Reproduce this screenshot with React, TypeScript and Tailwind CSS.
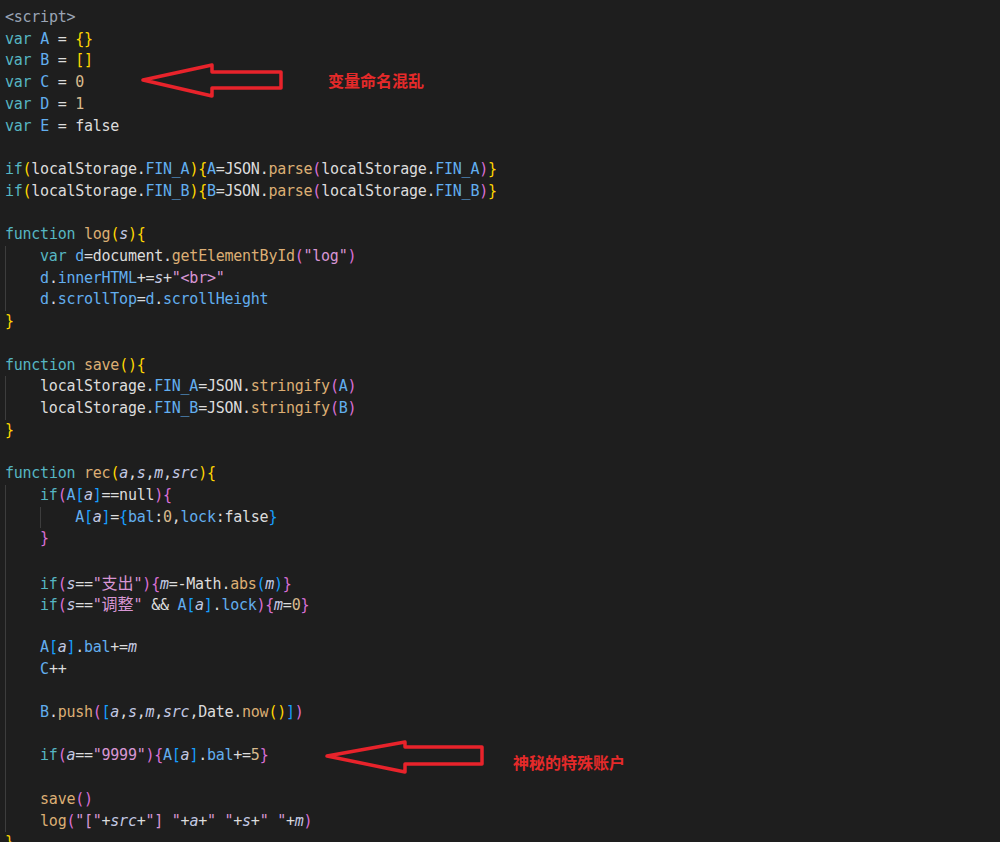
import React from 'react';

type Tok = [string, string];

const T = 'text-[#9aa5b6]';
const K = 'text-[#56b6c2]';
const V = 'text-[#62aeef]';
const W = 'text-[#dcdcdc]';
const F = 'text-[#dcae74]';
const P = 'text-[#c3c9e4] italic';
const S = 'text-[#d896d4]';
const SC = 'text-[#d896d4] font-["Noto_Sans_CJK_SC",sans-serif] text-[16px] tracking-normal';
const N = 'text-[#d7b98d]';
const B1 = 'text-[#ffd700]';
const B2 = 'text-[#da70d6]';
const B3 = 'text-[#179fff]';

interface Line {
  indent: number;
  toks: Tok[];
}

const L = (indent: number, ...toks: Tok[]): Line => ({ indent, toks });

const lines: Line[] = [
  L(0, [T, '<script>']),
  L(0, [K, 'var'], [W, ' '], [V, 'A'], [W, ' = '], [B1, '{}']),
  L(0, [K, 'var'], [W, ' '], [V, 'B'], [W, ' = '], [B1, '[]']),
  L(0, [K, 'var'], [W, ' '], [V, 'C'], [W, ' = '], [N, '0']),
  L(0, [K, 'var'], [W, ' '], [V, 'D'], [W, ' = '], [N, '1']),
  L(0, [K, 'var'], [W, ' '], [V, 'E'], [W, ' = false']),
  L(0),
  L(0, [K, 'if'], [B1, '('], [W, 'localStorage.'], [V, 'FIN_A'], [B1, ')'], [B1, '{'], [V, 'A'], [W, '=JSON.'], [F, 'parse'], [B2, '('], [W, 'localStorage.'], [V, 'FIN_A'], [B2, ')'], [B1, '}']),
  L(0, [K, 'if'], [B1, '('], [W, 'localStorage.'], [V, 'FIN_B'], [B1, ')'], [B1, '{'], [V, 'B'], [W, '=JSON.'], [F, 'parse'], [B2, '('], [W, 'localStorage.'], [V, 'FIN_B'], [B2, ')'], [B1, '}']),
  L(0),
  L(0, [K, 'function'], [W, ' '], [F, 'log'], [B1, '('], [P, 's'], [B1, ')'], [B1, '{']),
  L(1, [K, 'var'], [W, ' '], [V, 'd'], [W, '=document.'], [F, 'getElementById'], [B2, '('], [S, '"log"'], [B2, ')']),
  L(1, [V, 'd'], [W, '.'], [V, 'innerHTML'], [W, '+='], [P, 's'], [W, '+'], [S, '"<br>"']),
  L(1, [V, 'd'], [W, '.'], [V, 'scrollTop'], [W, '='], [V, 'd'], [W, '.'], [V, 'scrollHeight']),
  L(0, [B1, '}']),
  L(0),
  L(0, [K, 'function'], [W, ' '], [F, 'save'], [B1, '()'], [B1, '{']),
  L(1, [W, 'localStorage.'], [V, 'FIN_A'], [W, '=JSON.'], [F, 'stringify'], [B2, '('], [V, 'A'], [B2, ')']),
  L(1, [W, 'localStorage.'], [V, 'FIN_B'], [W, '=JSON.'], [F, 'stringify'], [B2, '('], [V, 'B'], [B2, ')']),
  L(0, [B1, '}']),
  L(0),
  L(0, [K, 'function'], [W, ' '], [F, 'rec'], [B1, '('], [P, 'a'], [W, ','], [P, 's'], [W, ','], [P, 'm'], [W, ','], [P, 'src'], [B1, ')'], [B1, '{']),
  L(1, [K, 'if'], [B2, '('], [V, 'A'], [B3, '['], [P, 'a'], [B3, ']'], [W, '==null'], [B2, ')'], [B2, '{']),
  L(2, [V, 'A'], [B3, '['], [P, 'a'], [B3, ']'], [W, '='], [B3, '{'], [V, 'bal'], [W, ':'], [N, '0'], [W, ','], [V, 'lock'], [W, ':false'], [B3, '}']),
  L(1, [B2, '}']),
  L(1),
  L(1, [K, 'if'], [B2, '('], [P, 's'], [W, '=='], [S, '"'], [SC, '支出'], [S, '"'], [B2, ')'], [B2, '{'], [P, 'm'], [W, '=-Math.'], [F, 'abs'], [B3, '('], [P, 'm'], [B3, ')'], [B2, '}']),
  L(1, [K, 'if'], [B2, '('], [P, 's'], [W, '=='], [S, '"'], [SC, '调整'], [S, '"'], [W, ' && '], [V, 'A'], [B3, '['], [P, 'a'], [B3, ']'], [W, '.'], [V, 'lock'], [B2, ')'], [B2, '{'], [P, 'm'], [W, '='], [N, '0'], [B2, '}']),
  L(1),
  L(1, [V, 'A'], [B3, '['], [P, 'a'], [B3, ']'], [W, '.'], [V, 'bal'], [W, '+='], [P, 'm']),
  L(1, [V, 'C'], [W, '++']),
  L(1),
  L(1, [V, 'B'], [W, '.'], [F, 'push'], [B2, '('], [B3, '['], [P, 'a'], [W, ','], [P, 's'], [W, ','], [P, 'm'], [W, ','], [P, 'src'], [W, ',Date.'], [F, 'now'], [B1, '()'], [B3, ']'], [B2, ')']),
  L(1),
  L(1, [K, 'if'], [B2, '('], [P, 'a'], [W, '=='], [S, '"9999"'], [B2, ')'], [B2, '{'], [V, 'A'], [B3, '['], [P, 'a'], [B3, ']'], [W, '.'], [V, 'bal'], [W, '+='], [N, '5'], [B2, '}']),
  L(1),
  L(1, [F, 'save'], [B2, '()']),
  L(1, [F, 'log'], [B2, '('], [S, '"["'], [W, '+'], [P, 'src'], [W, '+'], [S, '"] "'], [W, '+'], [P, 'a'], [W, '+'], [S, '" "'], [W, '+'], [P, 's'], [W, '+'], [S, '" "'], [W, '+'], [P, 'm'], [B2, ')']),
  L(0, [B1, '}']),
];

const Arrow: React.FC<{ points: string; className: string }> = ({ points, className }) => (
  <svg className={className} viewBox="0 0 170 40" width="170" height="40">
    <polygon points={points} fill="none" stroke="#e8232b" strokeWidth="3.5" strokeLinejoin="round" />
  </svg>
);

const App: React.FC = () => {
  return (
    <div className="relative w-[1000px] h-[842px] overflow-hidden bg-[#1e1e1e]">
      <div className="pt-[7px] pl-[5px] font-['DejaVu_Sans_Mono','Noto_Sans_CJK_SC',monospace] text-[15px] tracking-[-0.25px]">
        {lines.map((line, i) => (
          <div key={i} className="flex h-[21.73px] leading-[21.73px] whitespace-pre">
            {Array.from({ length: line.indent }).map((_, j) => (
              <span key={j} className="w-[35.1px] shrink-0 border-l border-[#3d3d3d]" />
            ))}
            <span>
              {line.toks.map(([cls, text], k) => (
                <span key={k} className={cls}>
                  {text}
                </span>
              ))}
            </span>
          </div>
        ))}
      </div>

      {/* annotations */}
      <Arrow
        className="absolute left-[138px] top-[60px]"
        points="5,20 74,5 74,12 143,12 143,28 74,28 74,36"
      />
      <span className="absolute left-[328px] top-[69px] text-[16px] leading-[22px] font-bold text-[#e52a2a] font-['Noto_Sans_CJK_SC',sans-serif]">
        变量命名混乱
      </span>

      <Arrow
        className="absolute left-[322px] top-[736px]"
        points="5,20 83,6 83,11 160,11 160,28 83,28 83,36"
      />
      <span className="absolute left-[513px] top-[751px] text-[16px] leading-[22px] font-bold text-[#e52a2a] font-['Noto_Sans_CJK_SC',sans-serif]">
        神秘的特殊账户
      </span>
    </div>
  );
};

export default App;
